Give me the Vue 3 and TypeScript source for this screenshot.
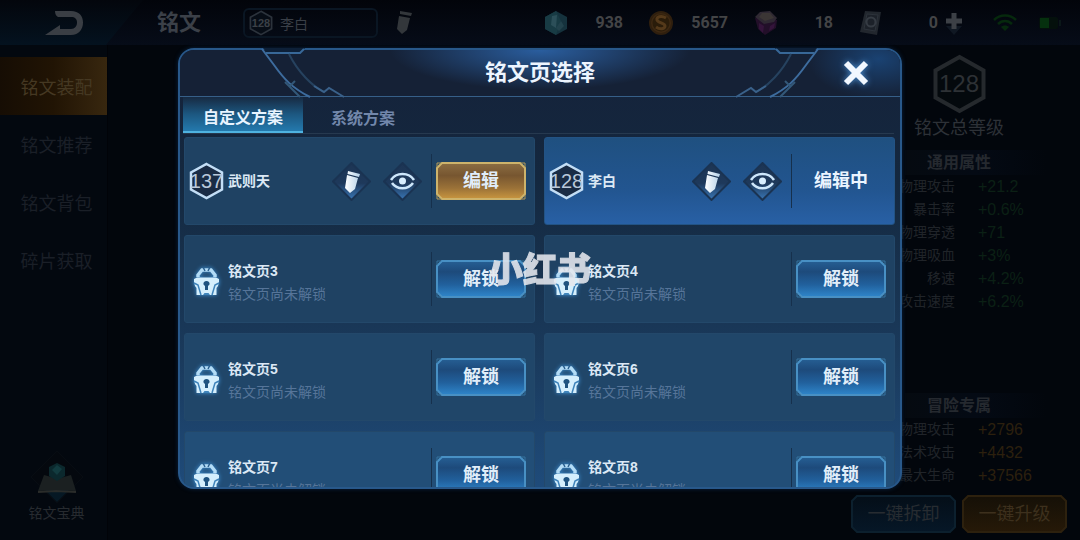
<script setup lang="ts">
import { ref } from 'vue'

interface Page {
  id: number
  name: string
  level?: number
  state: 'owned' | 'editing' | 'locked'
}

interface Stat {
  label: string
  value: string
}

const pages: Page[] = [
  { id: 1, name: '武则天', level: 137, state: 'owned' },
  { id: 2, name: '李白', level: 128, state: 'editing' },
  { id: 3, name: '铭文页3', state: 'locked' },
  { id: 4, name: '铭文页4', state: 'locked' },
  { id: 5, name: '铭文页5', state: 'locked' },
  { id: 6, name: '铭文页6', state: 'locked' },
  { id: 7, name: '铭文页7', state: 'locked' },
  { id: 8, name: '铭文页8', state: 'locked' },
]

const menu: string[] = ['铭文装配', '铭文推荐', '铭文背包', '碎片获取']
const tabs: string[] = ['自定义方案', '系统方案']
const activeTab = ref(0)

const general: Stat[] = [
  { label: '物理攻击', value: '+21.2' },
  { label: '暴击率', value: '+0.6%' },
  { label: '物理穿透', value: '+71' },
  { label: '物理吸血', value: '+3%' },
  { label: '移速', value: '+4.2%' },
  { label: '攻击速度', value: '+6.2%' },
]

const adventure: Stat[] = [
  { label: '物理攻击', value: '+2796' },
  { label: '法术攻击', value: '+4432' },
  { label: '最大生命', value: '+37566' },
]
</script>

<template>
  <div class="screen">
    <svg class="defs" width="0" height="0" aria-hidden="true">
      <defs>
        <linearGradient id="blueFill" x1="0" y1="0" x2="0" y2="1">
          <stop offset="0" stop-color="#265f94" />
          <stop offset="0.3" stop-color="#1d4a7b" />
          <stop offset="0.65" stop-color="#21609c" />
          <stop offset="1" stop-color="#2f86cb" />
        </linearGradient>
        <linearGradient id="goldFill" x1="0" y1="0" x2="0" y2="1">
          <stop offset="0" stop-color="#8b6d43" />
          <stop offset="0.35" stop-color="#775630" />
          <stop offset="0.7" stop-color="#9b7238" />
          <stop offset="1" stop-color="#c9963f" />
        </linearGradient>
        <linearGradient id="dimBlueFill" x1="0" y1="0" x2="0" y2="1">
          <stop offset="0" stop-color="#040e18" />
          <stop offset="1" stop-color="#061727" />
        </linearGradient>
        <linearGradient id="dimGoldFill" x1="0" y1="0" x2="0" y2="1">
          <stop offset="0" stop-color="#151007" />
          <stop offset="1" stop-color="#261908" />
        </linearGradient>
        <linearGradient id="diamondFill" x1="0" y1="0" x2="0" y2="1">
          <stop offset="0" stop-color="#1d3554" />
          <stop offset="0.55" stop-color="#1e395b" />
          <stop offset="1" stop-color="#3a78b8" />
        </linearGradient>
        <linearGradient id="penFill" x1="0" y1="0" x2="1" y2="0">
          <stop offset="0" stop-color="#ffffff" />
          <stop offset="1" stop-color="#b7d3ea" />
        </linearGradient>
      </defs>
    </svg>

    <header class="topbar">
      <button class="back" type="button" aria-label="返回">
        <svg width="40" height="26" viewBox="0 0 40 26">
          <path d="M11 1H27C35 1 39 6 39 12.500S35 25 27 25H1L16 15V19H27C31 19 33 16 33 12.500S31 7 27 7H14C12 6 11 4 11 1Z" fill="#3a3e44" />
        </svg>
      </button>
      <h1 class="screen-title">铭文</h1>
      <button class="current" type="button">
        <span class="hex hex-small">
          <svg viewBox="0 0 35 38"><path d="M17.500 2L33 10.500V27.500L17.500 36L2 27.500V10.500Z" fill="#070d16" stroke="#2c333c" stroke-width="2.500" /></svg>
          <span>128</span>
        </span>
        <span>李白</span>
      </button>
      <button class="rename" type="button" aria-label="重命名">
        <svg width="20" height="28" viewBox="0 0 20 28">
          <path d="M5 2L17 4L16 7L5 5ZM4 7L15 9L12 21L7 25L2 20Z" fill="#33373b" />
        </svg>
      </button>

      <div class="wallet">
        <div class="coin">
          <svg width="24" height="26" viewBox="0 0 24 26">
            <path d="M12 1L23 7V19L12 25L1 19V7Z" fill="#15323d" />
            <path d="M12 1L17 11L12 25L1 19V7Z" fill="#183b44" />
            <path d="M8 6L13 5L12 18L7 15Z" fill="#2c4f59" />
            <path d="M12 18L17 11L20 16L15 21Z" fill="#22424c" />
          </svg>
          <span>938</span>
        </div>
        <div class="coin">
          <svg width="24" height="26" viewBox="0 0 24 26">
            <circle cx="12" cy="13" r="11" fill="#3d2812" stroke="#2f1f0e" stroke-width="2" />
            <circle cx="12" cy="13" r="8.500" fill="#2a1c0a" />
            <path d="M17 8C12 5 7 7 8 10S16 13 16 16S11 20 7 17" fill="none" stroke="#54391a" stroke-width="3" />
          </svg>
          <span>5657</span>
        </div>
        <div class="coin">
          <svg width="24" height="26" viewBox="0 0 24 26">
            <path d="M1 8L4 19L11 25L22 18L23 10Z" fill="#220f29" />
            <path d="M5 13L10 16L9 23L5 19ZM16 16L21 13L20 18L15 21Z" fill="#34143b" />
            <path d="M1 7L6 2L16 1L23 8L20 12L10 14Z" fill="#2f2933" />
            <path d="M5 7L8 3L16 3L20 8L11 11Z" fill="#3b3635" />
          </svg>
          <span>18</span>
        </div>
        <div class="coin">
          <svg width="24" height="26" viewBox="0 0 24 26">
            <path d="M6 1L22 2L18 25L1 22Z" fill="#22272e" />
            <path d="M8 4L19 5L16 21L5 19Z" fill="#1c2129" stroke="#2d333b" />
            <circle cx="12" cy="12" r="4.500" fill="none" stroke="#353b43" stroke-width="2" />
          </svg>
          <span>0</span>
        </div>
      </div>
      <button class="plus" type="button" aria-label="添加">
        <svg width="18" height="26" viewBox="0 0 18 26">
          <path d="M1 16L9 25L17 16Z" fill="#101823" />
          <path d="M6.500 3H11.500V8.500H17V13.500H11.500V19H6.500V13.500H1V8.500H6.500Z" fill="#3c4046" />
        </svg>
      </button>
      <svg class="wifi" width="24" height="18" viewBox="0 0 24 18" fill="none" stroke="#06290d" stroke-width="2.500">
        <path d="M1 6C7 0 17 0 23 6M5 10C9 6 15 6 19 10" />
        <path d="M8 13C10 11 14 11 16 13L12 17Z" fill="#06290d" stroke="none" />
      </svg>
      <svg class="battery" width="24" height="14" viewBox="0 0 24 14">
        <rect x="1" y="1" width="19" height="12" rx="2" fill="#04100c" />
        <rect x="2" y="2" width="9" height="10" fill="#05300e" />
        <rect x="21" y="4" width="2" height="6" fill="#0a1718" />
      </svg>
    </header>

    <main class="stage">
      <nav class="menu">
        <button v-for="(item, i) in menu" :key="item" type="button" :class="{ on: i === 0 }">{{ item }}</button>
        <button class="codex" type="button">
          <svg width="54" height="54" viewBox="0 0 54 54">
            <path d="M27 1L53 27L27 53L1 27Z" fill="#04080e" stroke="#070c12" />
            <path d="M15 40H39L27 52Z" fill="#061824" />
            <path d="M14 25L25 28H30L41 25L46 41L29 40H25L8 41Z" fill="#1b2021" />
            <path d="M8 42L26 41L46 42" fill="none" stroke="#2a2c2a" stroke-width="2" />
            <path d="M27 13L35 17V26L27 31L19 26V17Z" fill="#0b282d" />
            <path d="M27 15L32 19L27 25L22 20Z" fill="#123b3f" />
          </svg>
          <span>铭文宝典</span>
        </button>
      </nav>

      <aside class="summary">
        <span class="hex hex-large">
          <svg viewBox="0 0 53 60"><path d="M26.500 3L50.500 16.500V43.500L26.500 57L2.500 43.500V16.500Z" fill="#04090d" stroke="#25292d" stroke-width="4" /></svg>
          <span>128</span>
        </span>
        <p class="total">铭文总等级</p>
        <h2>通用属性</h2>
        <dl class="green">
          <template v-for="s in general" :key="s.label">
            <dt>{{ s.label }}</dt>
            <dd>{{ s.value }}</dd>
          </template>
        </dl>
        <h2 class="second">冒险专属</h2>
        <dl class="amber">
          <template v-for="s in adventure" :key="s.label">
            <dt>{{ s.label }}</dt>
            <dd>{{ s.value }}</dd>
          </template>
        </dl>
        <div class="actions">
          <button class="plate dim" type="button">
            <svg viewBox="0 0 105 38" preserveAspectRatio="none"><path d="M6 1H99L104 6V32L99 37H6L1 32V6Z" fill="url(#dimBlueFill)" stroke="#0c202e" stroke-width="2" /></svg>
            <span>一键拆卸</span>
          </button>
          <button class="plate dim" type="button">
            <svg viewBox="0 0 105 38" preserveAspectRatio="none"><path d="M6 1H99L104 6V32L99 37H6L1 32V6Z" fill="url(#dimGoldFill)" stroke="#2d210e" stroke-width="2" /></svg>
            <span>一键升级</span>
          </button>
        </div>
      </aside>
    </main>

    <div class="overlay">
      <section class="dialog" role="dialog" aria-modal="true" aria-labelledby="dialog-title">
        <header class="dialog-head">
          <svg v-for="side in ['left', 'right']" :key="side" :class="['trim', side]" width="90" height="50" viewBox="0 0 90 50" fill="none">
            <path d="M3 0H45L41 5H7Z" fill="#0d2038" />
            <path d="M2 1L14 17C24 31 32 40 50 49" stroke="#3d6c9e" stroke-width="2" />
            <path d="M6 5H40L44 1" stroke="#386898" stroke-width="2" />
            <path d="M29 6C38 24 52 38 64 44" stroke="#26425f" stroke-width="2" />
            <path d="M54 38L64 44L69 40L84 49" stroke="#3a618a" stroke-width="2" />
            <path d="M25 34L40 49M30 38L35 33" stroke="#335878" stroke-width="2" />
          </svg>
          <h2 id="dialog-title">铭文页选择</h2>
          <button class="close" type="button" aria-label="关闭">
            <svg width="26" height="26" viewBox="0 0 26 26"><path d="M3 3L23 23M23 3L3 23" stroke="#f2f8ff" stroke-width="6" /></svg>
          </button>
        </header>

        <div class="tabs" role="tablist">
          <button v-for="(t, i) in tabs" :key="t" type="button" role="tab" :aria-selected="i === activeTab" :class="{ on: i === activeTab }" @click="activeTab = i">{{ t }}</button>
        </div>

        <ul class="pages">
          <li v-for="p in pages" :key="p.id" :class="['page', p.state]">
            <span v-if="p.level" class="hex">
              <svg viewBox="0 0 35 38"><path d="M17.500 2L33 10.500V27.500L17.500 36L2 27.500V10.500Z" fill="#1a2c45" stroke="#c3def6" stroke-width="2.500" /></svg>
              <span>{{ p.level }}</span>
            </span>
            <svg v-else class="lock" width="35" height="30" viewBox="0 0 35 30">
              <path d="M9 10V8L13 3H22L26 8V10" fill="none" stroke="#b3dcf6" stroke-width="3.500" />
              <path d="M14 0L16 4M21 0L19 4" stroke="#2a5f8e" stroke-width="1.500" />
              <path d="M5 12L8 10.500H27L30 12V15L29 19L27.500 21V28H7.500V21L6 19L5 15Z" fill="#d5effd" />
              <path d="M5 16L9 18L12 28M30 16L26 18L23 28" fill="none" stroke="#3f84bb" stroke-width="1.500" />
              <path d="M14 28L15.500 26H19.500L21 28Z" fill="#3f84bb" />
              <path d="M17.500 14C19.500 14 21 15.500 20.500 17.500L19 19V23H16V19L14.500 17.500C14 15.500 15.500 14 17.500 14Z" fill="#1f5380" />
            </svg>

            <div class="text">
              <strong>{{ p.name }}</strong>
              <span v-if="p.state === 'locked'">铭文页尚未解锁</span>
            </div>

            <div v-if="p.level" class="tools">
              <button type="button" aria-label="重命名">
                <svg width="39" height="39" viewBox="0 0 39 39">
                  <path d="M19.500 1L38 19.500L19.500 38L1 19.500Z" fill="url(#diamondFill)" stroke="#1a3352" stroke-width="2" />
                  <path d="M16 9L28 12L27 15L15.500 12ZM15 13L26 16L23 27L18 31L13 26Z" fill="url(#penFill)" />
                </svg>
              </button>
              <button type="button" aria-label="预览">
                <svg width="39" height="39" viewBox="0 0 39 39">
                  <path d="M19.500 1L38 19.500L19.500 38L1 19.500Z" fill="url(#diamondFill)" stroke="#1a3352" stroke-width="2" />
                  <path d="M8 18C13 10 26 10 31 18M9 21C14 28 25 28 30 21" fill="none" stroke="#cde6fa" stroke-width="2.500" />
                  <circle cx="19.500" cy="19" r="3.500" fill="#d8edfd" />
                </svg>
              </button>
            </div>

            <div class="action">
              <button v-if="p.state === 'owned'" class="plate" type="button">
                <svg viewBox="0 0 90 38" preserveAspectRatio="none">
                  <path d="M6 1H84L89 6V32L84 37H6L1 32V6Z" fill="url(#goldFill)" stroke="#cdb36b" stroke-width="2" />
                  <path d="M1 5V1H5M85 1H89V5M1 33V37H5M85 37H89V33" fill="none" stroke="#b59a58" />
                </svg>
                <span>编辑</span>
              </button>
              <span v-else-if="p.state === 'editing'" class="editing-label">编辑中</span>
              <button v-else class="plate" type="button">
                <svg viewBox="0 0 90 38" preserveAspectRatio="none">
                  <path d="M6 1H84L89 6V32L84 37H6L1 32V6Z" fill="url(#blueFill)" stroke="#4890c4" stroke-width="2" />
                  <path d="M1 5V1H5M85 1H89V5M1 33V37H5M85 37H89V33" fill="none" stroke="#35739f" />
                </svg>
                <span>解锁</span>
              </button>
            </div>
          </li>
        </ul>
      </section>
    </div>

    <div class="watermark">小红书</div>
  </div>
</template>

<style>
body {
  background: #02060c;
}
</style>

<style scoped>
* {
  box-sizing: border-box;
}

.screen {
  position: relative;
  display: flex;
  flex-direction: column;
  min-height: 100vh;
  background: #02060c;
  color: #2d3137;
  font-family: 'Liberation Sans', 'Noto Sans CJK SC', sans-serif;
}

.defs {
  position: absolute;
}

button {
  margin: 0;
  padding: 0;
  border: 0;
  background: none;
  color: inherit;
  font: inherit;
  cursor: pointer;
}

svg {
  display: block;
}

h1,
h2,
p,
dl,
dd,
ul {
  margin: 0;
  padding: 0;
}

.hex {
  display: grid;
  flex: none;
  place-items: center;
  width: 35px;
  height: 40px;
  color: #b9c8da;
  font-size: 20px;
  line-height: 24px;
}

.hex > * {
  grid-area: 1 / 1;
}

.hex svg {
  width: 100%;
  height: 100%;
}

.topbar {
  display: flex;
  align-items: center;
  height: 45px;
  padding-right: 18px;
  background: linear-gradient(#02040a, #060c18);
}

.back {
  display: flex;
  align-items: center;
  width: 143px;
  height: 45px;
  padding-left: 44px;
  background: linear-gradient(#03060c, #04121f);
  clip-path: polygon(0 0, 100% 0, 74% 100%, 0 100%);
}

.screen-title {
  margin-left: 14px;
  color: #3b4048;
  font-size: 22px;
  font-weight: 700;
  line-height: 30px;
}

.current {
  display: flex;
  align-items: center;
  gap: 7px;
  width: 135px;
  height: 30px;
  margin-left: 42px;
  padding-left: 4px;
  border: 2px solid #0a1623;
  border-radius: 6px;
  color: #3a3f47;
  font-size: 14px;
}

.hex-small {
  width: 24px;
  height: 26px;
  color: #3b4047;
  font-size: 11px;
  font-weight: 700;
}

.rename {
  margin-left: 17px;
}

.wallet {
  display: flex;
  gap: 26px;
  margin-left: auto;
}

.coin {
  display: flex;
  align-items: center;
  justify-content: space-between;
  width: 79px;
  color: #434446;
  font-family: Roboto, sans-serif;
  font-size: 16px;
  font-weight: 700;
}

.plus {
  margin-left: 7px;
}

.wifi {
  margin-left: 30px;
}

.battery {
  margin-left: 21px;
}

.stage {
  display: flex;
  flex: 1;
  justify-content: space-between;
}

.menu {
  display: flex;
  flex-direction: column;
  width: 108px;
  padding: 12px 0 18px;
  border-right: 1px solid #010308;
  background: #03080f;
}

.menu button {
  height: 58px;
  padding-left: 6px;
  color: #1a1f27;
  font-size: 18px;
}

.menu .on {
  background: linear-gradient(90deg, #160d04, #211404 50%, #38270f);
  color: #453822;
}

.menu .codex {
  display: flex;
  flex-direction: column;
  align-items: center;
  height: auto;
  margin-top: auto;
  color: #272b30;
  font-size: 14px;
  line-height: 18px;
}

.summary {
  display: flex;
  flex-direction: column;
  width: 229px;
  padding: 9px 13px 7px 0;
}

.hex-large {
  align-self: center;
  width: 53px;
  height: 60px;
  color: #2d3135;
  font-size: 24px;
}

.total {
  font-size: 18px;
  line-height: 28px;
  text-align: center;
}

.summary h2 {
  margin: 8px 20px 0 54px;
  padding-right: 34px;
  background: linear-gradient(90deg, #050a10, #040a14, #02060c);
  color: #25292f;
  font-size: 16px;
  font-weight: 700;
  line-height: 25px;
  text-align: center;
}

.summary .second {
  margin-top: auto;
}

.summary dl {
  display: grid;
  grid-template-columns: 104px 1fr;
  column-gap: 23px;
  line-height: 23px;
}

.summary dt {
  color: #202429;
  font-size: 14px;
  text-align: right;
}

.summary dd {
  font-size: 16px;
}

.green dd {
  color: #0b2015;
}

.amber dd {
  color: #2c200e;
}

.actions {
  display: flex;
  gap: 6px;
  margin-top: 8px;
}

.plate {
  display: grid;
  place-items: center;
  width: 90px;
  height: 38px;
  color: #e0edf9;
  font-size: 18px;
  font-weight: 700;
  line-height: 24px;
}

.plate > * {
  grid-area: 1 / 1;
}

.plate svg {
  width: 100%;
  height: 38px;
}

.plate.dim {
  flex: 1;
  color: #272c31;
  font-weight: 400;
}

.actions .plate + .plate {
  color: #3d301d;
}

.overlay {
  position: absolute;
  inset: 0;
  display: flex;
  padding: 48px 178px 51px;
}

.dialog {
  display: flex;
  flex: 1;
  flex-direction: column;
  min-width: 0;
  border: 2px solid #28588a;
  border-radius: 16px;
  background: linear-gradient(#15223a, #14283f 30%, #1a3a5c 70%, #1f4b7a);
  box-shadow: 0 0 4px #0a2340;
}

.dialog-head {
  position: relative;
  display: grid;
  grid-template-columns: 1fr auto 1fr;
  align-items: center;
  height: 47px;
  flex: none;
  border-bottom: 1px solid #365f88;
  border-radius: 14px 14px 0 0;
  background:
    radial-gradient(ellipse 150px 40px at 50% 0, #2a5e9f, transparent),
    radial-gradient(ellipse 70px 40px at 97% 20%, #1a4272, transparent),
    #152136;
}

.trim {
  position: absolute;
  top: -2px;
}

.trim.left {
  left: 80px;
}

.trim.right {
  right: 80px;
  transform: scaleX(-1);
}

.dialog-head h2 {
  grid-column: 2;
  color: #edf5ff;
  font-size: 22px;
  font-weight: 700;
  line-height: 30px;
}

.close {
  justify-self: end;
  margin-right: 31px;
  filter: drop-shadow(0 0 3px #4d8fd0);
}

.tabs {
  display: flex;
  flex: none;
  height: 37px;
  margin: 0 6px 0 3px;
  border-bottom: 1px solid #26394f;
}

.tabs button {
  width: 120px;
  padding-top: 3px;
  color: #7287ab;
  font-size: 16px;
  font-weight: 700;
}

.tabs .on {
  border-bottom: 2px solid #4fb2e0;
  background: linear-gradient(#172a42, #1c5780 50%, #2479ad);
  color: #e8f4ff;
}

.pages {
  display: grid;
  flex: 1 1 0;
  grid-template-columns: 1fr 1fr;
  grid-auto-rows: 88px;
  gap: 10px 9px;
  min-height: 0;
  margin-top: 3px;
  padding: 0 5px 0 4px;
  overflow-y: auto;
  border-radius: 0 0 14px 14px;
  scrollbar-width: none;
  list-style: none;
}

.page {
  display: flex;
  align-items: center;
  min-width: 0;
  padding: 0 8px 0 4px;
  border: 1px solid #23486a;
  border-radius: 3px;
  background: #1f4263;
}

.page:nth-child(n + 5) {
  background: #204669;
}

.page:nth-child(n + 7) {
  background: #224e77;
}

.page.editing {
  border-color: #235384;
  background: linear-gradient(#1f5080, #225590 60%, #2860a5);
}

.lock {
  flex: none;
  margin-top: 6px;
  filter: drop-shadow(0 0 2px #3f92d6);
}

.text {
  display: flex;
  flex: 1;
  flex-direction: column;
  padding-left: 4px;
  font-size: 14px;
  line-height: 23px;
}

.locked .text {
  padding-top: 7px;
}

.text strong {
  color: #dbe8f5;
  font-weight: 700;
}

.text span {
  color: #567599;
}

.tools {
  display: flex;
  gap: 12px;
}

.action {
  display: flex;
  justify-content: center;
  width: 95px;
  margin-left: 9px;
  padding: 8px 0 8px 4px;
  border-left: 1px solid #16304c;
}

.editing-label {
  color: #eaf4ff;
  font-size: 18px;
  font-weight: 700;
  line-height: 38px;
}

.watermark {
  position: absolute;
  top: 50%;
  left: 50%;
  color: #e6e8ee;
  font-size: 34px;
  font-weight: 900;
  line-height: 38px;
  opacity: 0.88;
  pointer-events: none;
  transform: translate(-50%, -50%);
  -webkit-text-stroke: 1px #e6e8ee;
}
</style>
